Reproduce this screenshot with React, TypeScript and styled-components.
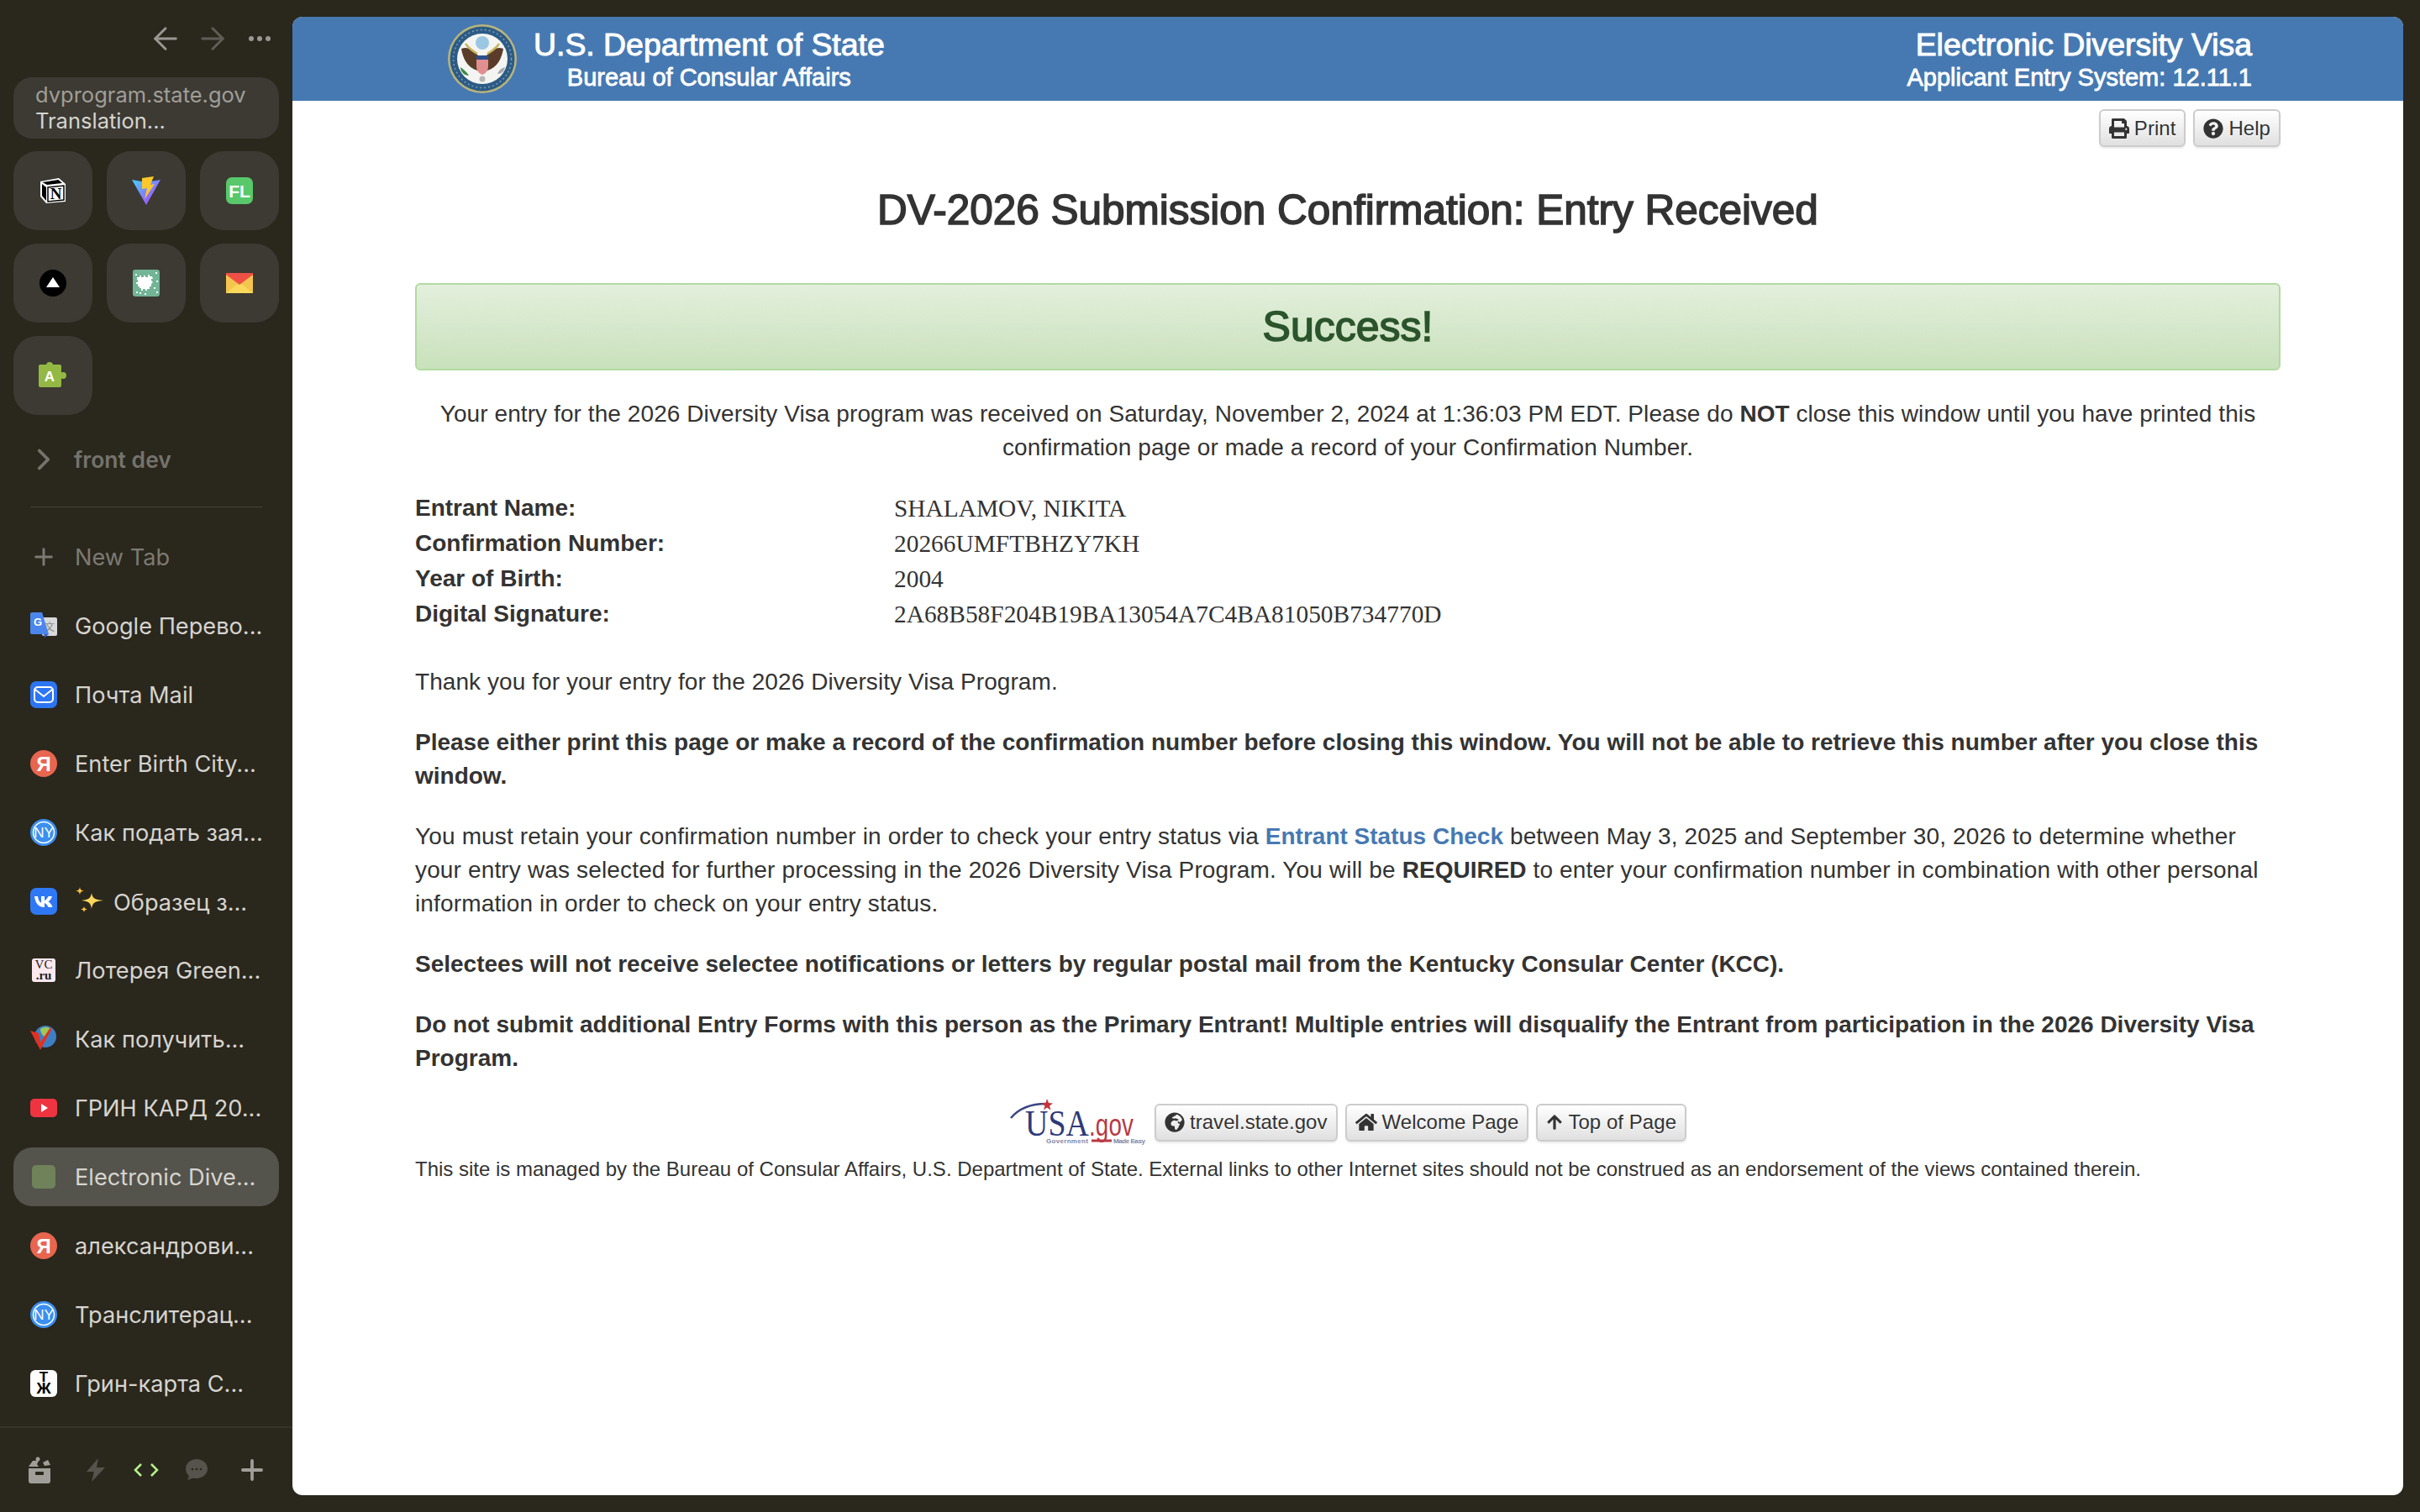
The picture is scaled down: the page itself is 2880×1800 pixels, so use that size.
import React from "react";
import styled, { createGlobalStyle } from "styled-components";
import { ArrowLeft, ArrowRight, ChevronRight, Plus } from "lucide-react";
import { FaPrint, FaQuestionCircle, FaGlobeAfrica, FaHome, FaArrowUp } from "react-icons/fa";

const Global = createGlobalStyle`
  html, body { margin: 0; padding: 0; height: 100%; overflow: hidden; background: #2a271d; }
  * { box-sizing: border-box; }
`;
const Shell = styled.div`display: flex; width: 2880px; height: 1800px; background: #2a271d;`;

/* ---------- sidebar ---------- */
const Sidebar = styled.aside`
  width: 348px; flex: none; height: 1800px; display: flex; flex-direction: column;
  font-family: Inter, "Noto Sans", sans-serif; position: relative;
`;
const NavBar = styled.div`
  height: 92px; display: flex; align-items: center; justify-content: flex-end;
  padding: 0 24px 0 0; gap: 26px;
`;
const NavIcon = styled.span<{ $dim?: boolean }>`
  display: flex; width: 30px; justify-content: center; color: ${p => (p.$dim ? "#5f5d56" : "#9a9893")};
  svg { flex: none; }
`;
const Dots = styled.span`display: flex; gap: 4px; width: 30px; justify-content: center;
  i { width: 6px; height: 6px; border-radius: 50%; background: #9a9893; display: block; }`;
const UrlPill = styled.div`
  margin: 0 16px; height: 73px; border-radius: 22px; background: #3c3a33; padding: 0 26px 2px;
  display: flex; flex-direction: column; justify-content: center; line-height: 31px; font-size: 25.5px;
`;
const UrlHost = styled.div`color: #a09e98;`;
const UrlTitle = styled.div`color: #d6d4cf;`;
const TileGrid = styled.div`
  margin: 15px 16px 0; display: grid; grid-template-columns: repeat(3, 94px); column-gap: 17px; row-gap: 16px;
`;
const Tile = styled.div`
  width: 94px; height: 94px; border-radius: 28px; background: #3c3a33;
  display: flex; align-items: center; justify-content: center;
`;
const Folder = styled.div`
  height: 70px; margin-top: 18px; display: flex; align-items: center; padding-left: 36px;
  color: #75736c; font-size: 26.5px; font-weight: 600;
`;
const FolderChevron = styled.span`width: 32px; margin-right: 20px; display: flex; justify-content: center;
  svg { flex: none; }`;
const Divider = styled.div`height: 1px; background: #45433a; margin: 21px 36px 0;`;
const TabList = styled.div`margin: 24px 16px 0; display: flex; flex-direction: column; gap: 12px;`;
const TabRow = styled.div<{ $active?: boolean; $muted?: boolean }>`
  height: 70px; display: flex; align-items: center; padding-left: 20px; gap: 21px; border-radius: 22px;
  font-size: 27.2px; white-space: nowrap; overflow: hidden;
  color: ${p => (p.$muted ? "#7c7a73" : "#d6d4cf")};
  background: ${p => (p.$active ? "#54534c" : "transparent")};
`;
const FavSlot = styled.span`width: 32px; height: 32px; flex: none; display: flex; align-items: center; justify-content: center;`;
const Sparkle = styled.span`display: inline-flex; margin-right: 12px; vertical-align: -5px;`;
const BottomBar = styled.div`
  position: absolute; left: 0; right: 0; top: 1698px; height: 102px; border-top: 2px solid #36342b;
  padding-left: 14px; display: grid; grid-template-columns: 66px 68px 52px 68px 64px;
  align-items: center; justify-items: center;
`;

/* ---------- main panel ---------- */
const Panel = styled.main`
  flex: 1; margin: 20px 20px 20px 0; background: #fff; border-radius: 12px; overflow: hidden;
  font-family: "Liberation Sans", Arial, sans-serif; color: #333; font-size: 28px; line-height: 40px;
  letter-spacing: 0.15px;
  b, strong { letter-spacing: 0; }
`;
const Banner = styled.header`
  height: 100px; background: #4679b2; color: #fff; display: flex; justify-content: space-between;
  padding: 0 180px 0 184px; align-items: center; letter-spacing: 0;
`;
const Brand = styled.div`display: flex; align-items: center; gap: 19px;`;
const BrandText = styled.div`display: flex; flex-direction: column; align-items: center; margin-top: 2px;`;
const BrandTitle = styled.div`font-size: 37.4px; line-height: 42px; -webkit-text-stroke: 1px #fff;`;
const BrandSub = styled.div`font-size: 29px; line-height: 36px; -webkit-text-stroke: 0.8px #fff;`;
const SystemText = styled.div`display: flex; flex-direction: column; align-items: flex-end; margin-top: 2px;`;
const Container = styled.div`padding: 0 146px; display: flex; flex-direction: column;`;
const ToolRow = styled.div`display: flex; justify-content: flex-end; gap: 9px; margin-top: 10px;`;
const Btn = styled.span`
  display: inline-flex; align-items: center; gap: 6px; height: 45px; padding: 0 10px;
  border: 2px solid #ccc; border-radius: 6px; font-size: 24px; letter-spacing: 0.05px; color: #333; text-shadow: 0 1px 0 #fff;
  background: linear-gradient(#fff, #e0e0e0); box-shadow: 0 2px 2px rgba(0,0,0,.08); white-space: nowrap;
`;
const Title = styled.h1`
  margin: 47px 0 0; font-size: 49.5px; line-height: 56px; font-weight: 400; text-align: center; color: #333;
  -webkit-text-stroke: 1.6px #333; letter-spacing: 0;
`;
const Alert = styled.div`
  margin-top: 59px; height: 104px; border: 2px solid #b2dba1; border-radius: 6px;
  background: linear-gradient(#e3efdc, #c9e1bc); display: flex; align-items: center; justify-content: center;
  color: #2b542c; font-size: 50px; font-weight: 400; -webkit-text-stroke: 1.6px #2b542c; letter-spacing: 0;
`;
const Lead = styled.p`margin: 32px 0 0; text-align: center; letter-spacing: 0.08px;`;
const Facts = styled.dl`margin: 32px 0 9px; display: grid; grid-template-columns: 570px 1fr; row-gap: 2px;`;
const FactLabel = styled.dt`font-weight: 700; letter-spacing: 0;`;
const FactValue = styled.dd`margin: 0; font-family: "Liberation Serif", "Times New Roman", serif; font-size: 29.4px; letter-spacing: 0;`;
const Para = styled.p`margin: 32px 0 0;`;
const ThanksPara = styled(Para)`letter-spacing: 0.07px;`;
const StrongPara = styled(Para)`font-weight: 700; letter-spacing: 0;`;
const StatusLink = styled.a`color: #4679b2; font-weight: 700; text-decoration: none; letter-spacing: 0;`;
const FootRow = styled.div`display: flex; justify-content: center; align-items: center; gap: 9px; margin-top: 28px;`;
const FootNote = styled.p`margin: 10px 0 0; font-size: 24px; line-height: 36px; letter-spacing: 0;`;
const LogoMark = styled.svg`flex: none; overflow: visible;`;

/* ---------- drawings ---------- */
const Seal = () => (
  <svg width="84" height="84" viewBox="0 0 84 84">
    <circle cx="42" cy="42" r="41" fill="#b9b47c" />
    <circle cx="42" cy="42" r="38.5" fill="#2c5b85" />
    <circle cx="42" cy="42" r="30" fill="#f4f5f2" />
    <circle cx="42" cy="42" r="34.500" fill="none" stroke="#7f9db4" strokeWidth="1.500" strokeDasharray="2 3" />
    <circle cx="42" cy="23" r="8" fill="#9cc7e2" />
    <path d="M39 40 C30 30 24 27 17 30 C19 42 24 52 36 56Z" fill="#5a3d28" />
    <path d="M45 40 C54 30 60 27 67 30 C65 42 60 52 48 56Z" fill="#5a3d28" />
    <path d="M22 24 C26 30 31 33 36 36M62 24 C58 30 53 33 48 36" stroke="#c9b45e" strokeWidth="2.5" fill="none" />
    <path d="M35 38h14v13c0 6-4 9-7 10-3-1-7-4-7-10z" fill="#e28f92" />
    <rect x="35" y="38" width="14" height="5" fill="#2d4f8c" />
    <path d="M16 52c3 2 7 5 10 10-5 0-10-4-10-10z" fill="#3f8a4a" />
    <path d="M60 60c2-5 5-7 9-8-1 5-4 8-9 8z" fill="#a9a9a9" />
    <circle cx="42" cy="66" r="3.5" fill="#b7b7b7" />
  </svg>
);
const UsaGov = () => (
  <LogoMark width="164" height="56" viewBox="0 0 164 56">
    <path d="M2 23 C12 11 26 6 44 6" stroke="#3a4684" strokeWidth="2.5" fill="none" />
    <path d="M45 0l2 5 5 .5-4 3 1.5 5-4.500-3-4 3 1.500-5-4-3 5-.5z" fill="#c5323a" />
    <text x="19" y="44" fontFamily="Liberation Serif" fontSize="45" fill="#2f3a78" textLength="76" lengthAdjust="spacingAndGlyphs">USA</text>
    <text x="95" y="44" fontFamily="Liberation Sans" fontSize="36" fill="#b83a44" textLength="53" lengthAdjust="spacingAndGlyphs">.gov</text>
    <text x="44" y="53" fontFamily="Liberation Sans" fontWeight="700" fontSize="8" fill="#7c86a8" textLength="50">Government</text>
    <text x="124" y="53" fontFamily="Liberation Sans" fontWeight="700" fontSize="8" fill="#7c86a8" textLength="38">Made Easy</text>
    <path d="M98 50h24" stroke="#b83a44" strokeWidth="3" />
  </LogoMark>
);
const Notion = () => (
  <svg width="32" height="32" viewBox="0 0 32 32">
    <path d="M1 5 L23 1 L31 8 V29 L8 31 L1 23Z" fill="#fff" />
    <path d="M3.500 6 L22.500 3 L27 7 L9 9Z" fill="#000" />
    <path d="M3 8 L8 12 V28 L3 22Z" fill="#000" />
    <path d="M10 12 L29 10 V27 L10 29Z" fill="#fff" stroke="#000" strokeWidth="1.500" />
    <text x="19.500" y="26" textAnchor="middle" fontFamily="Liberation Serif" fontWeight="700" fontSize="19" fill="#000">N</text>
  </svg>
);
const Vite = () => (
  <svg width="34" height="34" viewBox="0 0 34 34">
    <defs>
      <linearGradient id="vt" x1="0" y1="0" x2="1" y2="1"><stop offset="0" stopColor="#41d1ff" /><stop offset="1" stopColor="#bd34fe" /></linearGradient>
    </defs>
    <path d="M0 4 L17 7 L34 4 L17 34Z" fill="url(#vt)" />
    <path d="M12 2 L26 0 L22 10 L27 9 L15 27 L18 14 L12 15Z" fill="#fcc72b" />
  </svg>
);
const FLIcon = () => (
  <svg width="32" height="32" viewBox="0 0 32 32">
    <rect width="32" height="32" rx="7" fill="#58c86a" />
    <text x="16" y="24" textAnchor="middle" fontFamily="Liberation Sans" fontWeight="700" fontSize="21" fill="#fff">FL</text>
  </svg>
);
const TriangleCircle = () => (
  <svg width="32" height="32" viewBox="0 0 32 32">
    <circle cx="16" cy="16" r="16" fill="#000" />
    <path d="M16 9 L24 21 H8Z" fill="#fff" />
  </svg>
);
const Splat = () => (
  <svg width="32" height="32" viewBox="0 0 32 32">
    <rect width="32" height="32" rx="3" fill="#72b496" />
    <path d="M8 7h2v2h3V7h2v2h3V6h2v2h3l1 3h-2v2l2 2-2 2v3h-2v3h-3v2h-2v-2h-3v2h-2v-3H8v-2H6v-3H4v-2h2v-3H5V9h3z" fill="#fff" />
    <path d="M3 5h2v2H3zM27 3h2v2h-2zM28 26h2v2h-2zM4 26h2v2H4zM14 28h2v2h-2zM28 13h2v2h-2zM25 21h2v2h-2zM8 27h2v2H8z" fill="#fff" />
  </svg>
);
const Envelope = () => (
  <svg width="32" height="24" viewBox="0 0 32 24">
    <rect width="32" height="24" fill="#f4c44e" />
    <path d="M0 24 L16 11 L32 24Z" fill="#fbd85c" />
    <path d="M0 0 H32 V2 L16 14 L0 2Z" fill="#ef5046" />
  </svg>
);
const Puzzle = () => (
  <svg width="34" height="34" viewBox="0 0 34 34">
    <circle cx="13" cy="5" r="4" fill="#93b844" />
    <circle cx="29" cy="17" r="4" fill="#93b844" />
    <rect x="0" y="4" width="27" height="27" rx="2" fill="#93b844" />
    <text x="13" y="24" textAnchor="middle" fontFamily="Liberation Sans" fontWeight="700" fontSize="17" fill="#fff">A</text>
  </svg>
);
const GTranslate = () => (
  <svg width="32" height="32" viewBox="0 0 32 32">
    <rect x="14" y="6" width="18" height="22" rx="2" fill="#d9d9d9" />
    <text x="23" y="22" textAnchor="middle" fontFamily="Noto Sans CJK SC" fontSize="12" fill="#888">文</text>
    <path d="M2 0 H14 L22 26 H2 a2 2 0 0 1-2-2 V2 a2 2 0 0 1 2-2z" fill="#4b86ed" />
    <path d="M16 26 L22 26 L17 30z" fill="#3b5fc4" />
    <text x="9" y="16" textAnchor="middle" fontFamily="Liberation Sans" fontWeight="700" fontSize="13" fill="#fff">G</text>
  </svg>
);
const MailBlue = () => (
  <svg width="32" height="32" viewBox="0 0 32 32">
    <rect width="32" height="32" rx="7" fill="#2d75f2" />
    <rect x="5" y="7" width="22" height="18" rx="4" fill="none" stroke="#fff" strokeWidth="2" />
    <path d="M6 10 L16 18 L26 10" fill="none" stroke="#fff" strokeWidth="2" />
  </svg>
);
const Yandex = () => (
  <svg width="32" height="32" viewBox="0 0 32 32">
    <circle cx="16" cy="16" r="16" fill="#e8654f" />
    <text x="16" y="25" textAnchor="middle" fontFamily="Liberation Sans" fontWeight="700" fontSize="24" fill="#fff">Я</text>
  </svg>
);
const NY = () => (
  <svg width="32" height="32" viewBox="0 0 32 32">
    <circle cx="16" cy="16" r="16" fill="#3b8ff0" />
    <circle cx="16" cy="16" r="12.500" fill="none" stroke="#fff" strokeWidth="1.500" />
    <text x="16" y="22" textAnchor="middle" fontFamily="Liberation Sans" fontSize="17" fill="#fff">NY</text>
  </svg>
);
const VK = () => (
  <svg width="32" height="32" viewBox="0 0 32 32">
    <rect width="32" height="32" rx="7" fill="#2f78f5" />
    <path d="M5 10h4c.5 4 2 7 4 7.500V10h4v5c2-.5 3.500-3 4.500-5H26c-1 3-3 5.500-4.500 6.500 2 1 4 3.500 5 6.500h-5c-1-2.500-3-4.500-4.500-5v5h-1c-6 0-10-5-11-13z" fill="#fff" />
  </svg>
);
const VcRu = () => (
  <svg width="30" height="30" viewBox="0 0 30 30">
    <rect width="28" height="28" x="1" y="1" rx="3" fill="#fbe9ee" />
    <text x="15" y="13" textAnchor="middle" fontFamily="Liberation Serif" fontSize="15" fill="#222">VC</text>
    <text x="15" y="26" textAnchor="middle" fontFamily="Liberation Serif" fontWeight="700" fontSize="15" fill="#222">.ru</text>
  </svg>
);
const VGlobe = () => (
  <svg width="32" height="32" viewBox="0 0 32 32">
    <circle cx="18" cy="13" r="13" fill="#3d7fc4" />
    <path d="M12 4c5-3 9-3 12 0 1 4-3 6-5 9-3 1-7-4-7-9z" fill="#9cc85a" />
    <path d="M0 6 L10 9 L12 20 L24 2 L25 5 L12 29 Z" fill="#e3301f" />
  </svg>
);
const YouTube = () => (
  <svg width="32" height="22" viewBox="0 0 32 22">
    <rect width="32" height="22" rx="5" fill="#ee3440" />
    <path d="M13 6 L21 11 L13 16Z" fill="#fff" />
  </svg>
);
const GreenSquare = () => (
  <svg width="28" height="28" viewBox="0 0 28 28"><rect width="28" height="28" rx="5" fill="#6f8259" /></svg>
);
const TJ = () => (
  <svg width="32" height="32" viewBox="0 0 32 32">
    <rect width="32" height="32" rx="6" fill="#fff" />
    <text x="16" y="14" textAnchor="middle" fontFamily="Liberation Sans" fontWeight="700" fontSize="17" fill="#000">Т</text>
    <text x="16" y="28" textAnchor="middle" fontFamily="Liberation Sans" fontWeight="700" fontSize="19" fill="#000">Ж</text>
  </svg>
);
const SparkleIcon = () => (
  <svg width="34" height="34" viewBox="0 0 34 34">
    <path d="M20 8c1 6 3 8 14 9-11 1-13 3-14 10-1-7-3-9-12-10 9-1 11-3 12-9z" fill="#f9d65c" />
    <path d="M6 1c.5 3 1.500 4 5 4.500-3.500.5-4.500 1.500-5 5-.5-3.500-1.500-4.500-5-5 3.500-.5 4.500-1.500 5-4.500z" fill="#f9c23c" />
    <path d="M11 24c.4 2 1 3 4 3.500-3 .5-3.600 1.500-4 3.500-.4-2-1-3-4-3.500 3-.5 3.600-1.500 4-3.500z" fill="#f9c23c" />
  </svg>
);
const ArchiveIcon = () => (
  <svg width="28" height="32" viewBox="0 0 28 32">
    <path d="M1 14h26v15a3 3 0 0 1-3 3H4a3 3 0 0 1-3-3z" fill="#a09e98" />
    <rect x="9" y="18" width="10" height="4" rx="1" fill="#2a271d" />
    <path d="M1 12 L6 5h7l-2 4 2 3z" fill="#a09e98" />
    <circle cx="12" cy="3" r="2.500" fill="#a09e98" />
    <path d="M18 7l6-3 3 6-7 1z" fill="#a09e98" />
  </svg>
);
const ZapIcon = () => (
  <svg width="22" height="28" viewBox="0 0 22 28"><path d="M14 0 L0 16 H9 L6 28 L22 11 H12Z" fill="#55534b" /></svg>
);
const CodeIcon = () => (
  <svg width="30" height="18" viewBox="0 0 30 18" fill="none" stroke="#b6f28b" strokeWidth="2.500">
    <path d="M9 2 L2 9 L9 16M21 2 L28 9 L21 16" />
  </svg>
);
const ChatIcon = () => (
  <svg width="26" height="26" viewBox="0 0 26 26">
    <path d="M13 0c7 0 13 5 13 11.500S20 23 13 23c-1.500 0-3-.2-4-.6L2 25l2-5C1.500 18 0 15 0 11.500 0 5 6 0 13 0z" fill="#55534b" />
    <circle cx="8" cy="12" r="1.300" fill="#2a271d" /><circle cx="13" cy="12" r="1.300" fill="#2a271d" /><circle cx="18" cy="12" r="1.300" fill="#2a271d" />
  </svg>
);

const tiles = [<Notion />, <Vite />, <FLIcon />, <TriangleCircle />, <Splat />, <Envelope />, <Puzzle />];
const tabs: { icon: React.ReactNode; text: string; active?: boolean; sparkle?: boolean }[] = [
  { icon: <GTranslate />, text: "Google Перево..." },
  { icon: <MailBlue />, text: "Почта Mail" },
  { icon: <Yandex />, text: "Enter Birth City..." },
  { icon: <NY />, text: "Как подать зая..." },
  { icon: <VK />, text: "Образец з...", sparkle: true },
  { icon: <VcRu />, text: "Лотерея Green..." },
  { icon: <VGlobe />, text: "Как получить..." },
  { icon: <YouTube />, text: "ГРИН КАРД 20..." },
  { icon: <GreenSquare />, text: "Electronic Dive...", active: true },
  { icon: <Yandex />, text: "александрови..." },
  { icon: <NY />, text: "Транслитерац..." },
  { icon: <TJ />, text: "Грин-карта С..." },
];
const facts = [
  ["Entrant Name:", "SHALAMOV, NIKITA"],
  ["Confirmation Number:", "20266UMFTBHZY7KH"],
  ["Year of Birth:", "2004"],
  ["Digital Signature:", "2A68B58F204B19BA13054A7C4BA81050B734770D"],
];

export default function App() {
  return (
    <Shell>
      <Global />
      <Sidebar>
        <NavBar>
          <NavIcon><ArrowLeft size={42} strokeWidth={1.7} /></NavIcon>
          <NavIcon $dim><ArrowRight size={42} strokeWidth={1.7} /></NavIcon>
          <Dots><i /><i /><i /></Dots>
        </NavBar>
        <UrlPill>
          <UrlHost>dvprogram.state.gov</UrlHost>
          <UrlTitle>Translation...</UrlTitle>
        </UrlPill>
        <TileGrid>
          {tiles.map((t, i) => <Tile key={i}>{t}</Tile>)}
        </TileGrid>
        <Folder>
          <FolderChevron><ChevronRight size={42} strokeWidth={2.2} /></FolderChevron>
          <span>front dev</span>
        </Folder>
        <Divider />
        <TabList>
          <TabRow $muted>
            <FavSlot><Plus size={36} strokeWidth={2.2} /></FavSlot>
            <span>New Tab</span>
          </TabRow>
          {tabs.map(t => (
            <TabRow key={t.text} $active={t.active}>
              <FavSlot>{t.icon}</FavSlot>
              <span>
                {t.sparkle && <Sparkle><SparkleIcon /></Sparkle>}
                {t.text}
              </span>
            </TabRow>
          ))}
        </TabList>
        <BottomBar>
          <ArchiveIcon />
          <ZapIcon />
          <CodeIcon />
          <ChatIcon />
          <Plus size={38} color="#a09e98" strokeWidth={2.4} />
        </BottomBar>
      </Sidebar>
      <Panel>
        <Banner>
          <Brand>
            <Seal />
            <BrandText>
              <BrandTitle>U.S. Department of State</BrandTitle>
              <BrandSub>Bureau of Consular Affairs</BrandSub>
            </BrandText>
          </Brand>
          <SystemText>
            <BrandTitle>Electronic Diversity Visa</BrandTitle>
            <BrandSub>Applicant Entry System: 12.11.1</BrandSub>
          </SystemText>
        </Banner>
        <Container>
          <ToolRow>
            <Btn><FaPrint size={24} />Print</Btn>
            <Btn><FaQuestionCircle size={24} />Help</Btn>
          </ToolRow>
          <Title>DV-2026 Submission Confirmation: Entry Received</Title>
          <Alert>Success!</Alert>
          <Lead>
            Your entry for the 2026 Diversity Visa program was received on Saturday, November 2, 2024 at 1:36:03 PM EDT. Please do <b>NOT</b> close this window until you have printed this confirmation page or made a record of your Confirmation Number.
          </Lead>
          <Facts>
            {facts.map(([k, v]) => (
              <React.Fragment key={k}>
                <FactLabel>{k}</FactLabel>
                <FactValue>{v}</FactValue>
              </React.Fragment>
            ))}
          </Facts>
          <ThanksPara>Thank you for your entry for the 2026 Diversity Visa Program.</ThanksPara>
          <StrongPara>Please either print this page or make a record of the confirmation number before closing this window. You will not be able to retrieve this number after you close this window.</StrongPara>
          <Para>
            You must retain your confirmation number in order to check your entry status via <StatusLink>Entrant Status Check</StatusLink> between May 3, 2025 and September 30, 2026 to determine whether your entry was selected for further processing in the 2026 Diversity Visa Program. You will be <b>REQUIRED</b> to enter your confirmation number in combination with other personal information in order to check on your entry status.
          </Para>
          <StrongPara>Selectees will not receive selectee notifications or letters by regular postal mail from the Kentucky Consular Center (KCC).</StrongPara>
          <StrongPara>Do not submit additional Entry Forms with this person as the Primary Entrant! Multiple entries will disqualify the Entrant from participation in the 2026 Diversity Visa Program.</StrongPara>
          <FootRow>
            <UsaGov />
            <Btn><FaGlobeAfrica size={24} />travel.state.gov</Btn>
            <Btn><FaHome size={26} />Welcome Page</Btn>
            <Btn><FaArrowUp size={20} />Top of Page</Btn>
          </FootRow>
          <FootNote>This site is managed by the Bureau of Consular Affairs, U.S. Department of State. External links to other Internet sites should not be construed as an endorsement of the views contained therein.</FootNote>
        </Container>
      </Panel>
    </Shell>
  );
}
